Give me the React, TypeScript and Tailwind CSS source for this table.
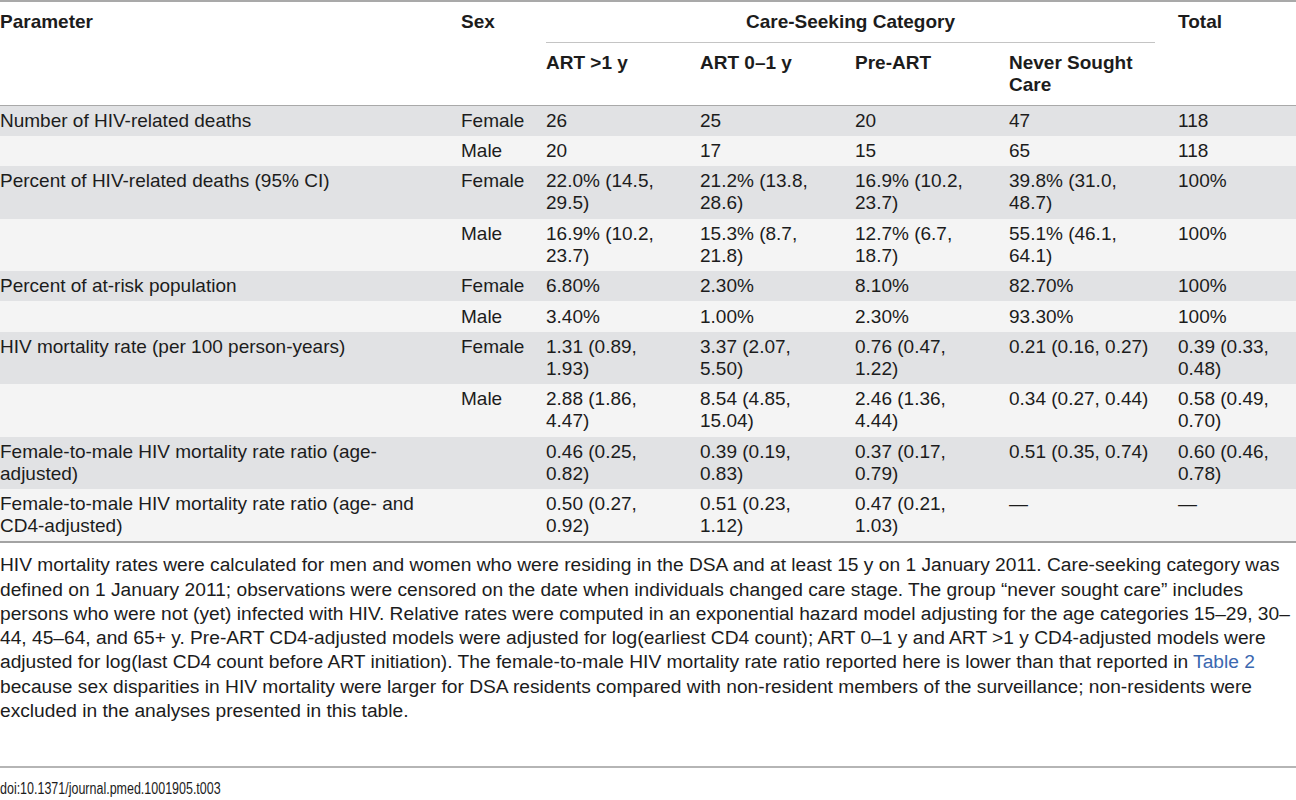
import React from "react";

type Row = { param: string; sex: string; cells: string[]; gray: boolean };

const rows: Row[] = [
  { param: "Number of HIV-related deaths", sex: "Female", cells: ["26", "25", "20", "47", "118"], gray: true },
  { param: "", sex: "Male", cells: ["20", "17", "15", "65", "118"], gray: false },
  {
    param: "Percent of HIV-related deaths (95% CI)",
    sex: "Female",
    cells: ["22.0% (14.5,\n29.5)", "21.2% (13.8,\n28.6)", "16.9% (10.2,\n23.7)", "39.8% (31.0,\n48.7)", "100%"],
    gray: true,
  },
  {
    param: "",
    sex: "Male",
    cells: ["16.9% (10.2,\n23.7)", "15.3% (8.7,\n21.8)", "12.7% (6.7,\n18.7)", "55.1% (46.1,\n64.1)", "100%"],
    gray: false,
  },
  { param: "Percent of at-risk population", sex: "Female", cells: ["6.80%", "2.30%", "8.10%", "82.70%", "100%"], gray: true },
  { param: "", sex: "Male", cells: ["3.40%", "1.00%", "2.30%", "93.30%", "100%"], gray: false },
  {
    param: "HIV mortality rate (per 100 person-years)",
    sex: "Female",
    cells: ["1.31 (0.89,\n1.93)", "3.37 (2.07,\n5.50)", "0.76 (0.47,\n1.22)", "0.21 (0.16, 0.27)", "0.39 (0.33,\n0.48)"],
    gray: true,
  },
  {
    param: "",
    sex: "Male",
    cells: ["2.88 (1.86,\n4.47)", "8.54 (4.85,\n15.04)", "2.46 (1.36,\n4.44)", "0.34 (0.27, 0.44)", "0.58 (0.49,\n0.70)"],
    gray: false,
  },
  {
    param: "Female-to-male HIV mortality rate ratio (age-\nadjusted)",
    sex: "",
    cells: ["0.46 (0.25,\n0.82)", "0.39 (0.19,\n0.83)", "0.37 (0.17,\n0.79)", "0.51 (0.35, 0.74)", "0.60 (0.46,\n0.78)"],
    gray: true,
  },
  {
    param: "Female-to-male HIV mortality rate ratio (age- and\nCD4-adjusted)",
    sex: "",
    cells: ["0.50 (0.27,\n0.92)", "0.51 (0.23,\n1.12)", "0.47 (0.21,\n1.03)", "—", "—"],
    gray: false,
  },
];

const footLines = [
  "HIV mortality rates were calculated for men and women who were residing in the DSA and at least 15 y on 1 January 2011. Care-seeking category was",
  "defined on 1 January 2011; observations were censored on the date when individuals changed care stage. The group \u201cnever sought care\u201d includes",
  "persons who were not (yet) infected with HIV. Relative rates were computed in an exponential hazard model adjusting for the age categories 15\u201329, 30\u2013",
  "44, 45\u201364, and 65+ y. Pre-ART CD4-adjusted models were adjusted for log(earliest CD4 count); ART 0\u20131 y and ART >1 y CD4-adjusted models were",
];

const td = "align-top whitespace-pre-line pl-0 pr-[12px] py-[4.2px] leading-[22px] font-normal text-left";
const th = "align-top text-left font-bold leading-[22px] pl-0 pr-[12px]";

export default function App() {
  return (
    <div className="w-[1296px] bg-white text-[#1c1c1c] font-['Liberation_Sans',Arial,sans-serif]">
      <table className="w-[1296px] table-fixed border-collapse text-[19px]">
        <colgroup>
          <col className="w-[461px]" />
          <col className="w-[85px]" />
          <col className="w-[154px]" />
          <col className="w-[155px]" />
          <col className="w-[154px]" />
          <col className="w-[169px]" />
          <col className="w-[118px]" />
        </colgroup>
        <thead className="bg-white">
          <tr className="border-t-2 border-[#a9a9a9]">
            <th rowSpan={2} className={`${th} pt-[9px]`}>Parameter</th>
            <th rowSpan={2} className={`${th} pt-[9px]`}>Sex</th>
            <th colSpan={4} className="align-top p-0 pr-[23px] font-bold leading-[22px]">
              <div className="pt-[9px] pb-[9px] text-center border-b border-[#c4c4c4]">Care-Seeking Category</div>
            </th>
            <th rowSpan={2} className={`${th} pt-[9px]`}>Total</th>
          </tr>
          <tr className="border-b border-[#a9a9a9]">
            <th className={`${th} pt-[9px] pb-[8.5px]`}>ART &gt;1 y</th>
            <th className={`${th} pt-[9px] pb-[8.5px]`}>ART 0–1 y</th>
            <th className={`${th} pt-[9px] pb-[8.5px]`}>Pre-ART</th>
            <th className={`${th} pt-[9px] pb-[8.5px] pr-[30px]`}>Never Sought Care</th>
          </tr>
        </thead>
        <tbody className="border-b-2 border-[#a3a3a3]">
          {rows.map((r, i) => (
            <tr key={i} className={r.gray ? "bg-[#e1e2e4]" : "bg-[#f4f4f4]"}>
              <td className={td}>{r.param}</td>
              <td className={td}>{r.sex}</td>
              {r.cells.map((c, j) => (
                <td key={j} className={td}>
                  {c}
                </td>
              ))}
            </tr>
          ))}
        </tbody>
      </table>

      <div className="pt-[10px] pb-[43px] text-[19.2px] leading-[24.3px] border-b-2 border-[#b5b5b5]">
        {footLines.map((l, i) => (
          <div key={i} className="whitespace-nowrap">
            {l}
          </div>
        ))}
        <div className="whitespace-nowrap">
          adjusted for log(last CD4 count before ART initiation). The female-to-male HIV mortality rate ratio reported here is lower than that reported in{" "}
          <span className="text-[#3b68b0]">Table 2</span>
        </div>
        <div className="whitespace-nowrap">
          because sex disparities in HIV mortality were larger for DSA residents compared with non-resident members of the surveillance; non-residents were
        </div>
        <div className="whitespace-nowrap">excluded in the analyses presented in this table.</div>
      </div>
      <div className="pt-[11px] text-[16px] leading-[20px]">
        <span className="inline-block origin-left scale-x-[0.78] whitespace-nowrap">doi:10.1371/journal.pmed.1001905.t003</span>
      </div>
    </div>
  );
}
